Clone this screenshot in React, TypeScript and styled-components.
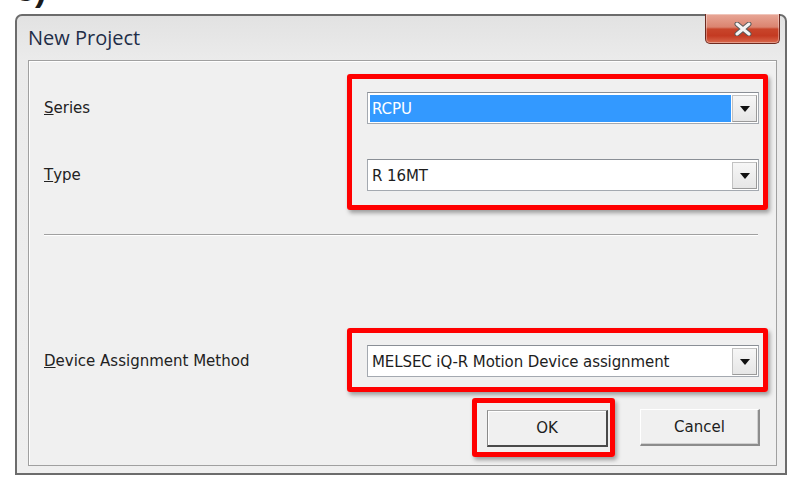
import React from 'react';
import styled, { createGlobalStyle } from 'styled-components';

const GlobalStyle = createGlobalStyle`
	html,
	body {
		margin: 0;
		padding: 0;
		background: #ffffff;
	}
	body {
		width: 792px;
		height: 481px;
		overflow: hidden;
		font-family: 'DejaVu Sans', 'Liberation Sans', sans-serif;
	}
`;

const Page = styled.div`
	width: 792px;
	height: 481px;
	display: flex;
	flex-direction: column;
`;

// tail of the step number printed above the dialog
const CutLine = styled.div`
	height: 14px;
	overflow: hidden;
	padding-left: 16px;
`;

const CutGlyph = styled.span`
	display: block;
	font: bold 34px/1 'Liberation Sans', sans-serif;
	margin-top: -28px;
	color: #1a1a1a;
`;

const Window = styled.div`
	margin-left: 15px;
	width: 772px;
	height: 461px;
	box-sizing: border-box;
	border: 2px solid #6c6c6c;
	border-radius: 7px 7px 0 0;
	background: linear-gradient(180deg, #e2e2e2 0%, #ebebeb 44px, #efefef 100%);
	display: flex;
	flex-direction: column;
	padding: 0 8px 7px 11px;
`;

const TitleBar = styled.div`
	height: 44px;
	display: flex;
	justify-content: space-between;
	align-items: flex-start;
`;

const Title = styled.span`
	margin: 10px 0 0 0;
	font: 20px/24px 'Open Sans', 'DejaVu Sans', sans-serif;
	color: #1e2e48;
`;

const CloseButton = styled.div`
	width: 75px;
	height: 30px;
	box-sizing: border-box;
	margin: -2px -3px 0 0;
	border: 1px solid #6e2a20;
	border-top: none;
	border-radius: 0 0 5px 5px;
	background: linear-gradient(
		180deg,
		#e8a797 0%,
		#db8470 45%,
		#c8452b 52%,
		#c43a22 75%,
		#d9694d 100%
	);
	box-shadow: inset 0 0 0 1px rgba(255, 255, 255, 0.35);
	display: flex;
	align-items: center;
	justify-content: center;
`;

const Panel = styled.div`
	flex: 1;
	box-sizing: border-box;
	border: 1px solid #a0a0a0;
	background: #f0f0f0;
	box-shadow: inset 1px 1px 0 #ffffff;
	padding: 13px 8px 8px 15px;
	display: flex;
	flex-direction: column;
`;

const FieldGroup = styled.div`
	display: grid;
	grid-template-columns: 303px 1fr;
`;

const LabelStack = styled.div<{ $top: number }>`
	display: flex;
	flex-direction: column;
	gap: 35px;
	padding-top: ${(p) => p.$top}px;
`;

const Label = styled.div`
	height: 32px;
	display: flex;
	align-items: center;
	font-size: 15px;
	color: #222;
`;

const Highlight = styled.div<{ $pad: string }>`
	border: 5px solid #ff0000;
	border-radius: 3px;
	box-shadow: 2px 3px 4px rgba(0, 0, 0, 0.35);
	padding: ${(p) => p.$pad};
	display: flex;
	flex-direction: column;
	gap: 35px;
`;

const Combo = styled.div`
	height: 32px;
	box-sizing: border-box;
	border: 1px solid #a4a9b0;
	border-top-color: #8a8f96;
	background: #ffffff;
	padding: 2px 1px 1px 2px;
	display: flex;
	gap: 1px;
`;

const ComboValue = styled.div<{ $selected?: boolean }>`
	flex: 1;
	display: flex;
	align-items: center;
	padding-left: 2px;
	font-size: 15px;
	letter-spacing: -0.1px;
	background: ${(p) => (p.$selected ? '#3399ff' : 'transparent')};
	color: ${(p) => (p.$selected ? '#ffffff' : '#1d1d1d')};
`;

const DropButton = styled.div`
	width: 25px;
	box-sizing: border-box;
	border: 1px solid #c2c2c2;
	border-right-color: #9a9a9a;
	border-bottom-color: #9a9a9a;
	background: linear-gradient(180deg, #f6f6f6 0%, #e6e6e6 100%);
	display: flex;
	align-items: center;
	justify-content: center;
	&::after {
		content: '';
		border-left: 5px solid transparent;
		border-right: 5px solid transparent;
		border-top: 6px solid #111;
	}
`;

const Separator = styled.div`
	height: 1px;
	margin: 24px 10px 93px 0;
	background: #a0a0a0;
	box-shadow: 0 1px 0 #ffffff;
`;

const ButtonRow = styled.div`
	display: flex;
	justify-content: flex-end;
	align-items: center;
	gap: 25px;
	margin-top: 6px;
	padding-right: 8px;
`;

const Button = styled.div<{ $primary?: boolean }>`
	width: ${(p) => (p.$primary ? 121 : 120)}px;
	height: 37px;
	box-sizing: border-box;
	border-style: solid;
	border-width: 1px 2px 2px 1px;
	border-color: ${(p) =>
		p.$primary
			? '#a8a8a8 #4a4a4a #4a4a4a #8a8a8a'
			: '#ffffff #8c8c8c #8c8c8c #ffffff'};
	background: #f0f0f0;
	box-shadow: ${(p) => (p.$primary ? 'inset 1px 1px 0 #ffffff' : 'inset -1px -1px 0 #d0d0d0')};
	display: flex;
	align-items: center;
	justify-content: center;
	font-size: 15px;
	color: #1d1d1d;
`;

const CloseIcon = () => (
	<svg width="20" height="14" viewBox="0 0 20 14">
		<path d="M4 2 L16 12 M16 2 L4 12" stroke="#5a5a5a" strokeWidth="5" strokeLinecap="round" />
		<path d="M4 2 L16 12 M16 2 L4 12" stroke="#f4f4f4" strokeWidth="3" strokeLinecap="round" />
	</svg>
);

const App = () => {
	return (
		<Page>
			<GlobalStyle />
			<CutLine>
				<CutGlyph>3)</CutGlyph>
			</CutLine>
			<Window>
				<TitleBar>
					<Title>New Project</Title>
					<CloseButton>
						<CloseIcon />
					</CloseButton>
				</TitleBar>
				<Panel>
					<FieldGroup>
						<LabelStack $top={18}>
							<Label>
								<u>S</u>eries
							</Label>
							<Label>
								<u>T</u>ype
							</Label>
						</LabelStack>
						<Highlight $pad="13px 4px 14px 15px">
							<Combo>
								<ComboValue $selected>RCPU</ComboValue>
								<DropButton />
							</Combo>
							<Combo>
								<ComboValue>R 16MT</ComboValue>
								<DropButton />
							</Combo>
						</Highlight>
					</FieldGroup>
					<Separator />
					<FieldGroup>
						<LabelStack $top={17}>
							<Label>
								<u>D</u>evice Assignment Method
							</Label>
						</LabelStack>
						<Highlight $pad="12px 4px 10px 15px">
							<Combo>
								<ComboValue>MELSEC iQ-R Motion Device assignment</ComboValue>
								<DropButton />
							</Combo>
						</Highlight>
					</FieldGroup>
					<ButtonRow>
						<Highlight $pad="7px 2px 5px 10px">
							<Button $primary>OK</Button>
						</Highlight>
						<Button>Cancel</Button>
					</ButtonRow>
				</Panel>
			</Window>
		</Page>
	);
};

export default App;
